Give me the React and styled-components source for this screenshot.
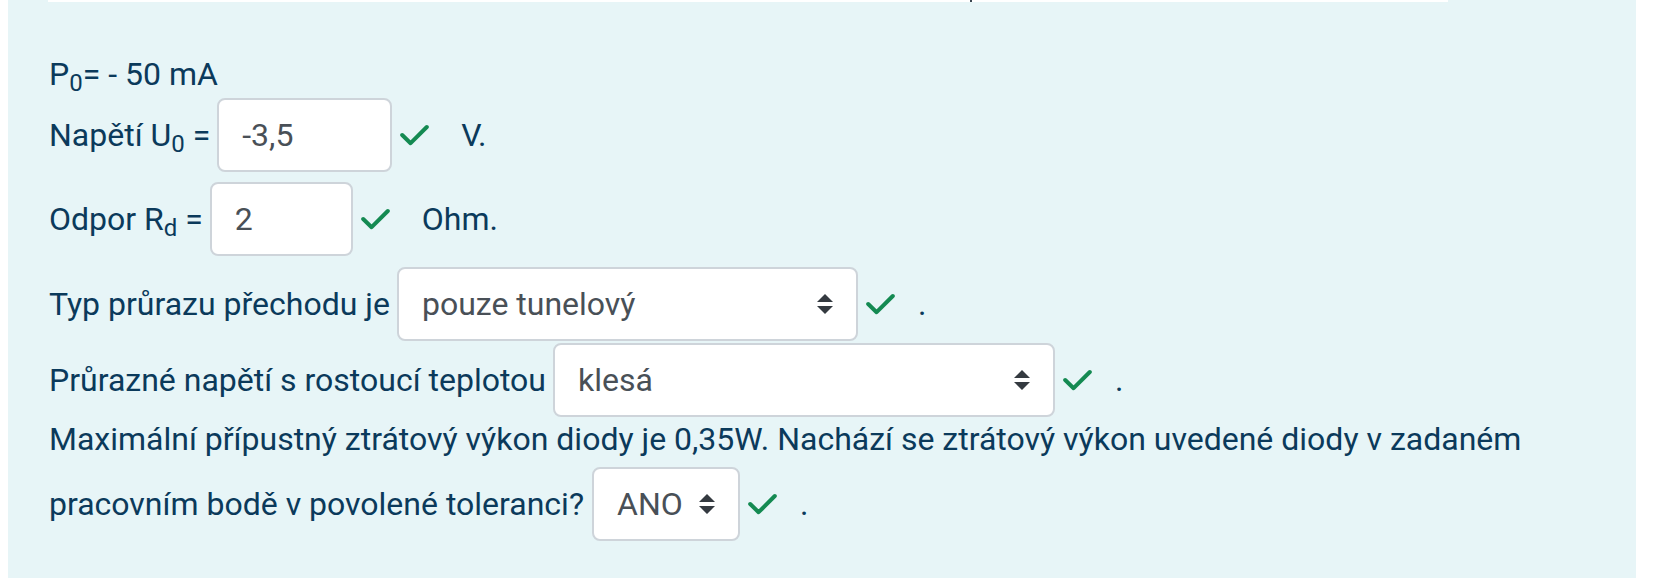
import React from "react";
import styled, { createGlobalStyle } from "styled-components";

const Global = createGlobalStyle`
  html, body { margin: 0; padding: 0; background: #ffffff; }
  body { font-family: Roboto, "Noto Sans", "Liberation Sans", sans-serif; }
`;

const Page = styled.div`
  padding-left: 8px;
  width: 1651px;
  height: 578px;
  overflow: hidden;
  box-sizing: border-box;
`;

const Panel = styled.div`
  width: 1628px;
  box-sizing: border-box;
  background: #e7f5f7;
  padding: 0 40px 40px 40px;
  color: #0b3a5b;
  font-size: 32px;
  line-height: 36px;
`;

const TopStrip = styled.div`
  width: 1400px;
  height: 2px;
  background: #ffffff;
  display: flex;
`;

const Speck = styled.span`
  width: 2px;
  height: 2px;
  margin-left: 922px;
  background: #3a4650;
`;

const Row = styled.div`
  display: flex;
  align-items: center;
  margin-top: ${(p) => p.$top}px;
  white-space: nowrap;
`;

const Label = styled.span`
  display: inline-block;
  padding-left: 1px;
`;

const Sub = styled.sub`
  font-size: 75%;
  line-height: 0;
  position: relative;
  vertical-align: baseline;
  bottom: -0.25em;
`;

const Field = styled.div`
  box-sizing: border-box;
  width: ${(p) => p.$w}px;
  height: 74px;
  margin-left: ${(p) => p.$ml}px;
  background: #ffffff;
  border: 2px solid #ced4da;
  border-radius: 8px;
  display: flex;
  align-items: center;
  padding-left: 23px;
  padding-right: 23px;
  color: #495057;
  font-size: 32px;
`;

const Value = styled.span`
  flex: 1;
`;

const Arrows = styled.svg`
  width: 16px;
  height: 20px;
  flex: none;
`;

const CheckSvg = styled.svg`
  width: 29px;
  height: 22px;
  margin-left: 8px;
  flex: none;
`;

const Tail = styled.span`
  margin-left: ${(p) => p.$ml}px;
`;

const Check = () => (
  <CheckSvg viewBox="0 0 29 22">
    <path
      d="M2.2 11 L10.6 19.2 L26.8 3"
      fill="none"
      stroke="#148a52"
      strokeWidth="4"
      strokeLinecap="round"
      strokeLinejoin="round"
    />
  </CheckSvg>
);

const SelectArrows = () => (
  <Arrows viewBox="0 0 4 5">
    <path d="M2 0L0 2h4zm0 5L0 3h4z" fill="#343a40" />
  </Arrows>
);

export default function App() {
  return (
    <Page>
      <Global />
      <Panel>
        <TopStrip>
          <Speck />
        </TopStrip>

        <Row $top={54}>
          <Label>
            P<Sub>0</Sub>= - 50 mA
          </Label>
        </Row>

        <Row $top={6}>
          <Label>
            Napětí U<Sub>0</Sub> =
          </Label>
          <Field $w={175} $ml={7}>
            <Value>-3,5</Value>
          </Field>
          <Check />
          <Tail $ml={32}>V.</Tail>
        </Row>

        <Row $top={10}>
          <Label>
            Odpor R<Sub>d</Sub> =
          </Label>
          <Field $w={143} $ml={7}>
            <Value>2</Value>
          </Field>
          <Check />
          <Tail $ml={32}>Ohm.</Tail>
        </Row>

        <Row $top={11}>
          <Label>Typ průrazu přechodu je</Label>
          <Field $w={461} $ml={7}>
            <Value>pouze tunelový</Value>
            <SelectArrows />
          </Field>
          <Check />
          <Tail $ml={23}>.</Tail>
        </Row>

        <Row $top={2}>
          <Label>Průrazné napětí s rostoucí teplotou</Label>
          <Field $w={502} $ml={7}>
            <Value>klesá</Value>
            <SelectArrows />
          </Field>
          <Check />
          <Tail $ml={23}>.</Tail>
        </Row>

        <Row $top={4}>
          <Label>
            Maximální přípustný ztrátový výkon diody je 0,35W. Nachází se
            ztrátový výkon uvedené diody v zadaném
          </Label>
        </Row>

        <Row $top={10}>
          <Label>pracovním bodě v povolené toleranci?</Label>
          <Field $w={148} $ml={8}>
            <Value>ANO</Value>
            <SelectArrows />
          </Field>
          <Check />
          <Tail $ml={23}>.</Tail>
        </Row>
      </Panel>
    </Page>
  );
}
